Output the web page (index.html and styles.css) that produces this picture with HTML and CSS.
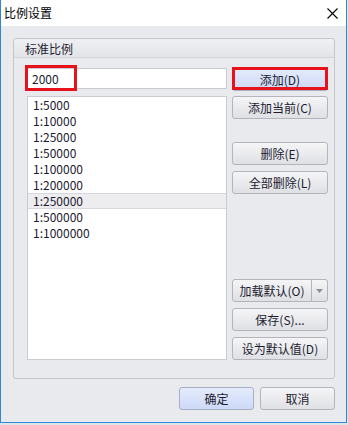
FILE: index.html
```html
<!DOCTYPE html>
<html lang="zh-CN">
<head>
    <meta charset="UTF-8">
    <meta name="viewport" content="width=device-width, initial-scale=1.0">
    <title>比例设置</title>
    <link rel="stylesheet" href="styles.css">
</head>
<body>
    <div class="window">
        <div class="titlebar">
            <span class="title">比例设置</span>
            <svg class="close" width="11" height="11" viewBox="0 0 11 11">
                <path d="M0.5 0.5 L10.5 10.5 M10.5 0.5 L0.5 10.5" stroke="#000" stroke-width="1.1" fill="none"/>
            </svg>
        </div>
        <div class="content">
            <div class="group">
                <div class="group-header">标准比例</div>
                <div class="group-body">
                    <div class="left-col">
                        <div class="input-wrap">
                            <input type="text" class="scale-input" value="2000">
                            <span class="mark mark-input"></span>
                        </div>
                        <ul class="scale-list">
                            <li>1:5000</li>
                            <li>1:10000</li>
                            <li>1:25000</li>
                            <li>1:50000</li>
                            <li>1:100000</li>
                            <li>1:200000</li>
                            <li class="selected">1:250000</li>
                            <li>1:500000</li>
                            <li>1:1000000</li>
                        </ul>
                    </div>
                    <div class="right-col">
                        <div class="btn-wrap">
                            <button class="btn btn-primary">添加(D)</button>
                            <span class="mark mark-btn"></span>
                        </div>
                        <button class="btn gap-small">添加当前(C)</button>
                        <button class="btn gap-large">删除(E)</button>
                        <button class="btn">全部删除(L)</button>

                        <div class="bottom-btns">
                            <div class="split-btn">
                                <span class="split-main">加载默认(O)</span>
                                <span class="split-arrow">
                                    <svg width="7" height="4" viewBox="0 0 7 4"><path d="M0 0 L7 0 L3.5 4 Z" fill="#8d8f94"/></svg>
                                </span>
                            </div>
                            <button class="btn">保存(S)...</button>
                            <button class="btn">设为默认值(D)</button>
                        </div>
                    </div>
                </div>
            </div>
            <div class="footer">
                <button class="btn btn-primary footer-btn">确定</button>
                <button class="btn footer-btn">取消</button>
            </div>
        </div>
    </div>
</body>
</html>
```

FILE: styles.css
```css
body {
    margin: 0;
    background-color: #dce6e8;
    font-family: "Noto Sans CJK SC", "Noto Sans", sans-serif;
    font-size: 12px;
    color: #1c1c30;
}
.window {
    width: 347px;
    height: 423px;
    box-sizing: border-box;
    border: 1px solid #2c87d8;
    border-top: none;
    background: #e9eaee;
    display: flex;
    flex-direction: column;
}
.titlebar {
    height: 26px;
    flex: none;
    background: #fff;
    display: flex;
    align-items: center;
    justify-content: space-between;
    padding: 0 8px 0 3px;
}
.title {
    font-size: 12px;
    color: #000;
    line-height: 14px;
}
.close {
    display: block;
    margin-right: 0;
}
.content {
    flex: 1;
    display: flex;
    flex-direction: column;
}
.group {
    margin: 12px 11px 0 12px;
    border: 1px solid #c5c7cc;
    border-radius: 3px;
}
.group-header {
    height: 16px;
    padding: 2px 0 0 11px;
    line-height: 16px;
    background: linear-gradient(#eff0f3, #e3e4e8);
    border-bottom: 1px solid #d2d4d8;
    border-radius: 3px 3px 0 0;
    color: #1c1c30;
}
.group-body {
    display: flex;
    gap: 5px;
    padding: 10px 6px 18px 13px;
}
.left-col {
    width: 200px;
    display: flex;
    flex-direction: column;
}
.input-wrap {
    position: relative;
    height: 21px;
}
.scale-input {
    width: 100%;
    height: 21px;
    box-sizing: border-box;
    border: 1px solid #c9cbd0;
    background: #fff;
    padding: 0 4px;
    font-family: inherit;
    font-size: 12px;
    color: #1c1c30;
    outline: none;
}
.scale-list {
    list-style: none;
    margin: 7px 0 0;
    padding: 0;
    height: 264px;
    box-sizing: border-box;
    border: 1px solid #c9cbd0;
    background: #fff;
}
.scale-list li {
    height: 16px;
    line-height: 16px;
    padding-left: 5px;
}
.scale-list li.selected {
    background: #ededef;
    border-top: 1px solid #d7d8db;
    border-bottom: 1px solid #d7d8db;
    line-height: 14px;
    height: 14px;
}
.right-col {
    width: 96px;
    display: flex;
    flex-direction: column;
}
.btn {
    display: block;
    width: 100%;
    height: 23px;
    box-sizing: border-box;
    border: 1px solid #b3b5bb;
    border-radius: 3px;
    background: linear-gradient(#f5f5f7, #dfe0e4);
    font-family: inherit;
    font-size: 12px;
    color: #1c1c30;
    padding: 0;
    line-height: 21px;
    text-align: center;
}
.btn-primary {
    background: linear-gradient(#e4ebfc, #cdd9f7);
    border-color: #a7afc2;
}
.btn-wrap {
    position: relative;
}
.gap-small {
    margin-top: 5px;
}
.gap-large {
    margin-top: 23px;
}
.right-col > .btn + .btn {
    margin-top: 6px;
}
.right-col > .btn.gap-large {
    margin-top: 23px;
}
.bottom-btns {
    margin-top: auto;
    display: flex;
    flex-direction: column;
    gap: 6px;
}
.split-btn {
    display: flex;
    height: 23px;
    box-sizing: border-box;
    border: 1px solid #b3b5bb;
    border-radius: 3px;
    background: linear-gradient(#f5f5f7, #dfe0e4);
}
.split-main {
    flex: 1;
    text-align: center;
    line-height: 21px;
    border-right: 1px solid #b3b5bb;
}
.split-arrow {
    width: 15px;
    display: flex;
    align-items: center;
    justify-content: center;
}
.mark {
    position: absolute;
    border: 3px solid #e8121c;
    pointer-events: none;
}
.mark-input {
    left: -2px;
    top: -3px;
    width: 46px;
    height: 20px;
}
.mark-btn {
    left: 0;
    top: -1px;
    width: 90px;
    height: 17px;
}
.footer {
    display: flex;
    justify-content: flex-end;
    gap: 6px;
    margin: 8px 11px 0 0;
}
.footer-btn {
    width: 75px;
}
```
